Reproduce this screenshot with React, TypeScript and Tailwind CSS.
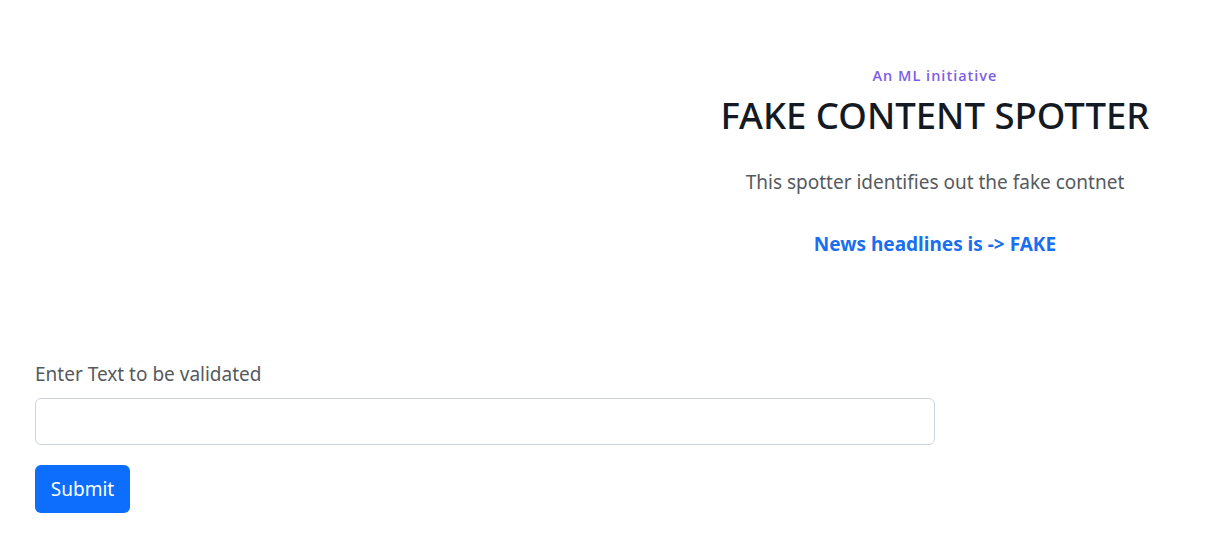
export default function App() {
  return (
    <div className="min-h-[547px] w-full bg-white" style={{ fontFamily: '"Noto Sans", "Open Sans", sans-serif' }}>
      <div className="flex pt-[65px]">
        <div className="w-[648px] shrink-0" />
        <div className="flex w-[574px] flex-col items-center text-center">
          <p className="font-['Open_Sans',sans-serif] text-[14.5px] leading-[22px] font-semibold tracking-[1px] text-[#7d5ee3]">An ML initiative</p>
          <h1 className="mt-[1px] text-[36.5px] leading-[54px] font-medium text-[#141a24]">FAKE CONTENT SPOTTER</h1>
          <p className="mt-[26px] text-[19px] leading-[28px] text-[#555a60]">This spotter identifies out the fake contnet</p>
          <p className="mt-[34px] text-[19px] leading-[28px] font-bold text-[#1a6ef0]">News headlines is -&gt; FAKE</p>
        </div>
      </div>
      <form className="mt-[102px] flex flex-col px-[35px]" onSubmit={(e) => e.preventDefault()}>
        <label className="text-[19px] leading-[28px] text-[#555a60]">Enter Text to be validated</label>
        <input type="text" className="mt-[10px] h-[47px] w-[900px] rounded-[6px] border border-[#ced4da] px-4 text-[18px] outline-none" />
        <button type="submit" className="mt-[20px] h-[48px] w-[95px] rounded-[6px] bg-[#0d6efd] text-[19px] text-white">Submit</button>
      </form>
    </div>
  );
}
